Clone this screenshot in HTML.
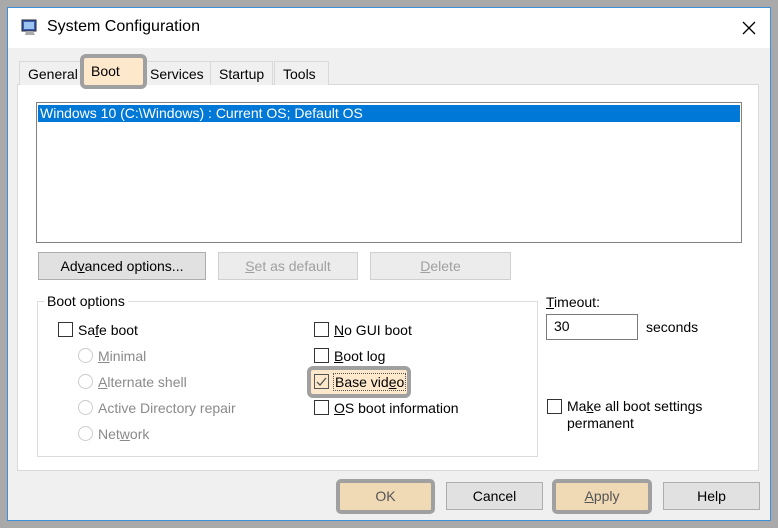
<!DOCTYPE html>
<html><head><meta charset="utf-8"><style>
*{box-sizing:border-box;margin:0;padding:0}
body{width:778px;height:528px;background:#a9a9a9;position:relative;overflow:hidden;font-family:"Liberation Sans",sans-serif;font-size:14px;color:#000}
.a{position:absolute}
.win{left:7px;top:7px;width:764px;height:514px;background:#f0f0f0;border:1px solid #3c8fd8}
.title{left:8px;top:8px;width:762px;height:40px;background:#fff}
.btn{position:absolute;height:28px;background:#e1e1e1;border:1px solid #adadad;text-align:center;line-height:26px}
.dis{color:#a0a0a0;background:#ececec;border-color:#d0d0d0}
.hl{position:absolute;border:4px solid #a0a0a0;border-radius:5px}
.cb{position:absolute;width:15px;height:15px;border:1px solid #333;background:#fff}
.rb{position:absolute;width:15px;height:15px;border:1px solid #ccc;border-radius:50%;background:#fff}
.gray{color:#8a8a8a}
.tab{position:absolute;top:61px;height:24px;background:#f0f0f0;border:1px solid #d9d9d9;border-bottom:none;line-height:24px;padding:0 8px}
u{text-decoration:underline}
</style></head><body>
<div class="a win"></div>
<div class="a title"></div>
<svg class="a" style="left:21px;top:19px" width="18" height="18" viewBox="0 0 18 18"><rect x="1" y="1" width="14" height="11" fill="#3a5fb0" stroke="#223" stroke-width="1"/><rect x="3" y="3" width="10" height="7" fill="#9cc4f0"/><path d="M5 12 L4 16 H14 L12 12" fill="#aaa"/></svg>
<div class="a" style="left:47px;top:18px;font-size:16px">System Configuration</div>
<svg class="a" style="left:741px;top:20px" width="16" height="16"><path d="M2 2 L14 14 M14 2 L2 14" stroke="#000" stroke-width="1.3"/></svg>
<!-- tab page -->
<div class="a" style="left:17px;top:84px;width:742px;height:387px;background:#fff;border:1px solid #d9d9d9"></div>
<div class="tab" style="left:19px">General</div>
<div class="tab" style="left:141px">Services</div>
<div class="tab" style="left:210px">Startup</div>
<div class="tab" style="left:274px;width:55px">Tools</div>
<div class="a" style="left:80px;top:54px;width:67px;height:35px;background:#fde8cc;border:4px solid #a0a0a0;border-radius:6px"></div>
<div class="a" style="left:91px;top:63px">Boot</div>
<!-- list -->
<div class="a" style="left:36px;top:102px;width:706px;height:141px;background:#fff;border:1px solid #828282"></div>
<div class="a" style="left:38px;top:105px;width:702px;height:17px;background:#0078d7;color:#fff;line-height:17px;padding-left:2px">Windows 10 (C:\Windows) : Current OS; Default OS</div>
<!-- buttons -->
<div class="btn" style="left:38px;top:252px;width:168px">Ad<u>v</u>anced options...</div>
<div class="btn dis" style="left:218px;top:252px;width:140px"><u>S</u>et as default</div>
<div class="btn dis" style="left:370px;top:252px;width:141px"><u>D</u>elete</div>
<!-- group -->
<div class="a" style="left:37px;top:301px;width:501px;height:156px;border:1px solid #dcdcdc"></div>
<div class="a" style="left:44px;top:293px;background:#fff;padding:0 3px">Boot options</div>
<div class="cb" style="left:58px;top:322px"></div><div class="a" style="left:78px;top:322px">Sa<u>f</u>e boot</div>
<div class="rb" style="left:78px;top:348px"></div><div class="a gray" style="left:98px;top:348px"><u>M</u>inimal</div>
<div class="rb" style="left:78px;top:374px"></div><div class="a gray" style="left:98px;top:374px"><u>A</u>lternate shell</div>
<div class="rb" style="left:78px;top:400px"></div><div class="a gray" style="left:98px;top:400px">Active Directory repair</div>
<div class="rb" style="left:78px;top:426px"></div><div class="a gray" style="left:98px;top:426px">Net<u>w</u>ork</div>
<div class="cb" style="left:314px;top:322px"></div><div class="a" style="left:334px;top:322px"><u>N</u>o GUI boot</div>
<div class="cb" style="left:314px;top:348px"></div><div class="a" style="left:334px;top:348px"><u>B</u>oot log</div>
<div class="a" style="left:307px;top:366px;width:104px;height:32px;background:#fde8cc;border:4px solid #a0a0a0;border-radius:6px"></div>
<div class="cb" style="left:314px;top:374px;background:#fde8cc;border-color:#555"></div>
<svg class="a" style="left:315px;top:375px" width="13" height="13"><path d="M2 7 L5 10 L11 3" stroke="#555" stroke-width="1.3" fill="none"/></svg>
<div class="a" style="left:333px;top:373px;border:1px dotted #555;padding:0 1px">Base vid<u>e</u>o</div>
<div class="cb" style="left:314px;top:400px"></div><div class="a" style="left:334px;top:400px"><u>O</u>S boot information</div>
<!-- timeout -->
<div class="a" style="left:546px;top:294px"><u>T</u>imeout:</div>
<div class="a" style="left:546px;top:314px;width:92px;height:26px;border:1px solid #7a7a7a;background:#fff;padding:3px 0 0 7px">30</div>
<div class="a" style="left:646px;top:319px">seconds</div>
<div class="cb" style="left:547px;top:399px"></div>
<div class="a" style="left:567px;top:398px;line-height:17px">Ma<u>k</u>e all boot settings<br>permanent</div>
<!-- bottom buttons -->
<div class="a" style="left:336px;top:479px;width:99px;height:35px;background:#f0d9b5;border:4px solid #a0a0a0;border-radius:5px;text-align:center;line-height:27px;color:#555">OK</div>
<div class="btn" style="left:446px;top:482px;width:97px">Cancel</div>
<div class="a" style="left:552px;top:479px;width:100px;height:35px;background:#f0d9b5;border:4px solid #a0a0a0;border-radius:5px;text-align:center;line-height:27px;color:#555"><u>A</u>pply</div>
<div class="btn" style="left:663px;top:482px;width:97px">Help</div>
</body></html>
